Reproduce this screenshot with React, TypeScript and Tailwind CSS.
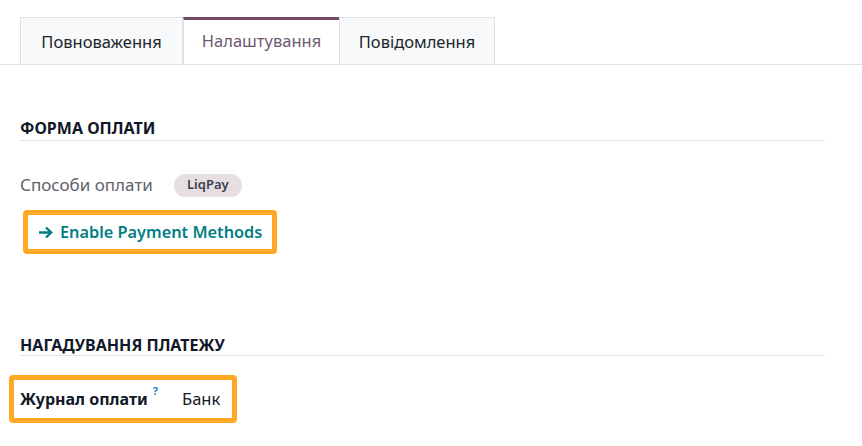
import { useState } from "react";

const tabs = ["Повноваження", "Налаштування", "Повідомлення"];
const widths = ["w-[163px]", "w-[157px]", "w-[156px]"];

const App = () => {
  const [active, setActive] = useState(1);

  return (
    <div className="w-[862px] h-[446px] bg-white overflow-hidden font-['Noto_Sans',sans-serif] text-[#212529]">
      {/* tabs */}
      <div className="flex pt-[17px] pl-[20px] border-b border-[#dee2e6]">
        {tabs.map((t, i) => (
          <button
            key={t}
            onClick={() => setActive(i)}
            className={
              i === active
                ? `${widths[i]} h-[47px] -mb-px bg-white border-x border-[#dee2e6] border-t-[3px] border-t-[#714b67] text-[16.5px] text-[#6e5a72] pb-[2px]`
                : `${widths[i]} h-[47px] bg-[#f8f9fa] border border-b-0 border-[#dee2e6] text-[16.5px] text-[#212529] pt-[2px] -ml-px first:ml-0`
            }
          >
            {t}
          </button>
        ))}
      </div>

      <div className="pl-[20px] pr-[37px]">
        {/* section 1 */}
        <div className="mt-[53px] pb-[2px] border-b border-[#dee2e6]">
          <h3 className="text-[16px] font-bold uppercase text-[#111827] leading-[20px]">Форма оплати</h3>
        </div>

        <div className="flex items-center mt-[32px] h-[24px]">
          <span className="text-[17px] text-[#5f636a] w-[154px]">Способи оплати</span>
          <span className="h-[23px] px-[13px] rounded-full bg-[#e6dedf] text-[13px] font-semibold text-[#374151] flex items-center">
            LiqPay
          </span>
        </div>

        <div className="mt-[13px] ml-[3px] w-[254px] h-[44px] border-[5px] border-[#ffa826] rounded-[4px] flex items-center pl-[10px]">
          <span className="text-[16.3px] font-semibold text-[#017e84] flex items-center gap-[7px]">
            <svg width="15" height="13" viewBox="0 0 15 13" fill="none">
              <path d="M1 6.5H13M8 1.5L13.2 6.5L8 11.5" stroke="#017e84" strokeWidth="2.4" />
            </svg>
            Enable Payment Methods
          </span>
        </div>

        {/* section 2 */}
        <div className="mt-[81px] border-b border-[#dee2e6]">
          <h3 className="text-[16px] font-bold uppercase text-[#111827] leading-[20px]">Нагадування платежу</h3>
        </div>

        <div className="mt-[19px] -ml-[11px] w-[228px] h-[48px] border-[5px] border-[#ffa826] rounded-[4px] flex items-center pl-[6px]">
          <span className="text-[16px] font-bold text-[#111827]">Журнал оплати</span>
          <sup className="text-[11px] font-bold text-[#1e88c7] ml-[5px] -mt-[6px]">?</sup>
          <span className="text-[16.5px] text-[#111827] ml-[24px]">Банк</span>
        </div>
      </div>
    </div>
  );
};

export default App;
